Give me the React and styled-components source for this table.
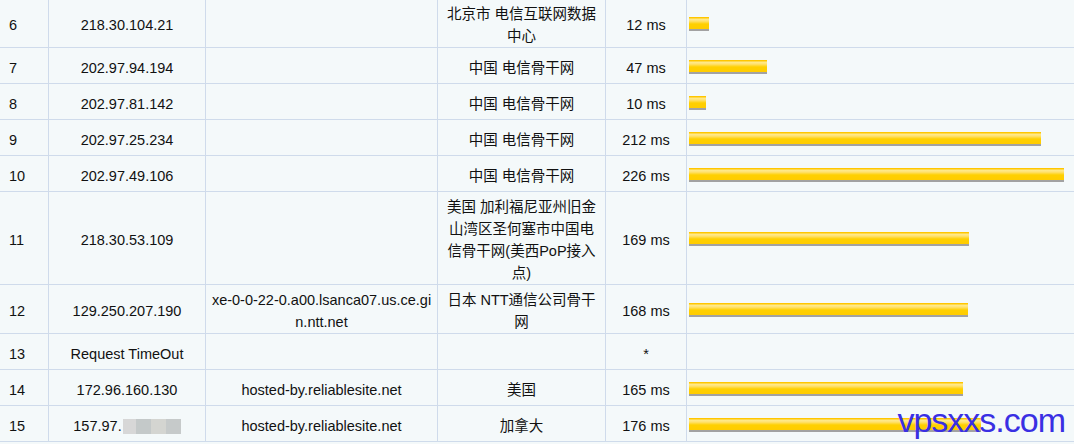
import React from "react";
import styled, { createGlobalStyle } from "styled-components";

const GlobalStyle = createGlobalStyle`
  body {
    margin: 0;
    background: #f4f9fa;
    font-family: "Liberation Sans", "Noto Sans CJK SC", Arial, sans-serif;
    font-size: 14.5px;
    color: #111;
    overflow: hidden;
  }
`;

const Page = styled.div`
  position: relative;
  margin-top: -1px;
  width: 1074px;
`;

const Row = styled.div`
  display: grid;
  grid-template-columns: 49px 157px 232px 168px 81px 1fr;
  border-bottom: 1px solid #cfdbeb;
`;

const Cell = styled.div`
  display: flex;
  align-items: center;
  justify-content: ${(p) => (p.$left ? "flex-start" : "center")};
  text-align: ${(p) => (p.$left ? "left" : "center")};
  min-height: 35px;
  box-sizing: border-box;
  padding: ${(p) => (p.$left ? "4px 2px 0 9px" : "4px 5px 0")};
  line-height: 22px;
  border-right: ${(p) => (p.$last ? "none" : "1px solid #cfdbeb")};
  word-break: break-all;
`;

const BarCell = styled(Cell)`
  justify-content: flex-start;
  padding: 2px 0 0 2px;
`;

const Bar = styled.div`
  height: 12px;
  border-bottom: 2px solid #a2a2a2;
  background: linear-gradient(
    #ffc600 0,
    #ffc600 1px,
    #ffeb8f 2px,
    #ffe272 4px,
    #ffd000 7px,
    #ffcc00 100%
  );
`;

const Masked = styled.span`
  display: inline-flex;
  height: 15px;
  vertical-align: middle;
  margin-left: 1px;
  margin-top: 1px;
`;

const Blot = styled.span`
  display: inline-block;
  width: ${(p) => p.$w}px;
  height: 100%;
  background: ${(p) => p.$c};
`;

const Watermark = styled.div`
  position: absolute;
  top: 404px;
  right: 9px;
  font-family: "Liberation Sans", Arial, sans-serif;
  font-size: 34px;
  line-height: 34px;
  letter-spacing: -1px;
  color: #3a2fe3;
  pointer-events: none;
`;

const hops = [
  { hop: 6, ip: "218.30.104.21", host: "", loc: "北京市 电信互联网数据中心", ms: 12 },
  { hop: 7, ip: "202.97.94.194", host: "", loc: "中国 电信骨干网", ms: 47 },
  { hop: 8, ip: "202.97.81.142", host: "", loc: "中国 电信骨干网", ms: 10 },
  { hop: 9, ip: "202.97.25.234", host: "", loc: "中国 电信骨干网", ms: 212 },
  { hop: 10, ip: "202.97.49.106", host: "", loc: "中国 电信骨干网", ms: 226 },
  {
    hop: 11,
    ip: "218.30.53.109",
    host: "",
    loc: "美国 加利福尼亚州旧金山湾区圣何塞市中国电信骨干网(美西PoP接入点)",
    ms: 169,
  },
  {
    hop: 12,
    ip: "129.250.207.190",
    host: "xe-0-0-22-0.a00.lsanca07.us.ce.gin.ntt.net",
    loc: "日本 NTT通信公司骨干网",
    ms: 168,
  },
  { hop: 13, ip: "Request TimeOut", host: "", loc: "", ms: null },
  { hop: 14, ip: "172.96.160.130", host: "hosted-by.reliablesite.net", loc: "美国", ms: 165 },
  { hop: 15, ip: "157.97.", masked: true, host: "hosted-by.reliablesite.net", loc: "加拿大", ms: 176 },
];

const scale = 375 / 226;

const App = () => {
  return (
    <>
      <GlobalStyle />
      <Page>
        {hops.map((h) => (
          <Row key={h.hop}>
            <Cell $left>{h.hop}</Cell>
            <Cell>
              {h.ip}
              {h.masked && (
                <Masked>
                  <Blot $w={13} $c="#d7d7d7" />
                  <Blot $w={15} $c="#c4c9c9" />
                  <Blot $w={15} $c="#d4d5d1" />
                  <Blot $w={15} $c="#c6caca" />
                </Masked>
              )}
            </Cell>
            <Cell>{h.host}</Cell>
            <Cell>{h.loc}</Cell>
            <Cell>{h.ms == null ? "*" : `${h.ms} ms`}</Cell>
            <BarCell $last>
              {h.ms != null && <Bar style={{ width: Math.round(h.ms * scale) }} />}
            </BarCell>
          </Row>
        ))}
        <Watermark>vpsxxs.com</Watermark>
      </Page>
    </>
  );
};

export default App;
